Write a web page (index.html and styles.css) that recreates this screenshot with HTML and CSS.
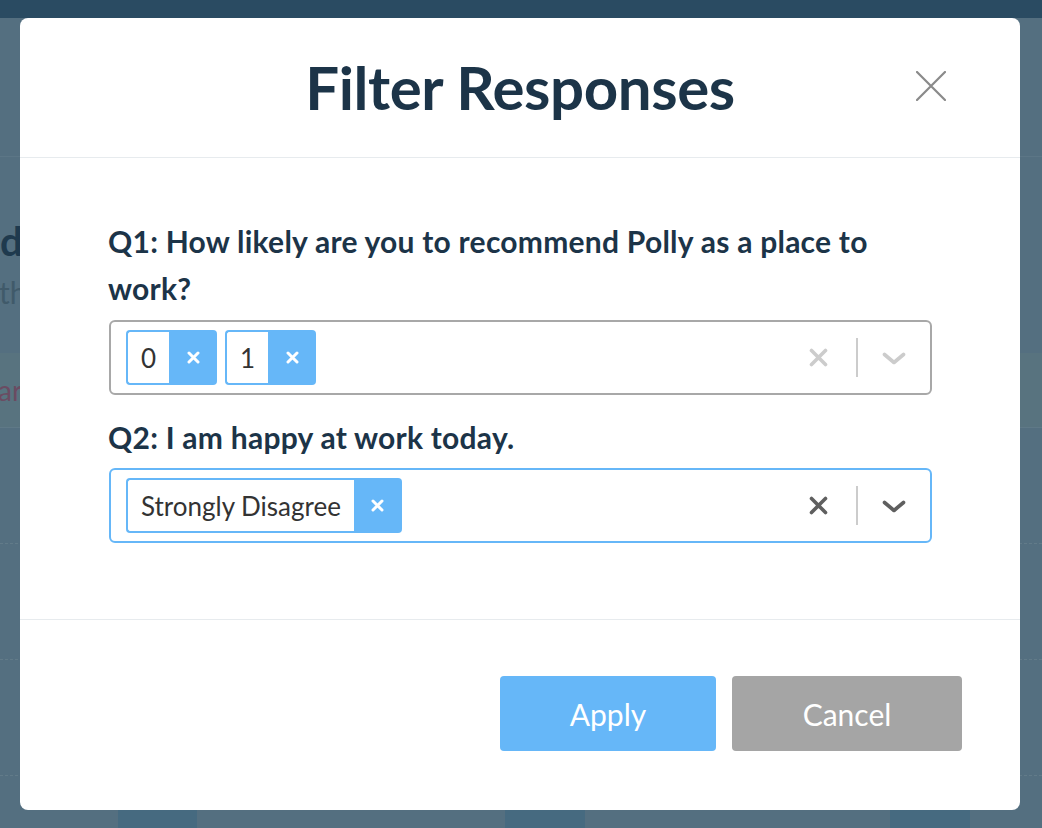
FILE: index.html
```html
<!DOCTYPE html>
<html lang="en">
<head>
<meta charset="utf-8">
<title>Filter Responses</title>
<link rel="stylesheet" href="styles.css">
</head>
<body>
<div class="page">
  <div class="topbar"></div>
  <div class="page-head"></div>
  <div class="page-title">da</div>
  <div class="page-sub">th</div>
  <div class="page-tabs"><span>ar</span></div>
  <div class="page-row"></div>
  <div class="page-row"></div>
  <div class="page-row"></div>
  <div class="page-foot"><span class="blk b1"></span><span class="blk b2"></span><span class="blk b3"></span></div>
</div>

<div class="overlay">
  <div class="modal">
    <div class="modal-header">
      <h2 class="modal-title">Filter Responses</h2>
      <button class="close" aria-label="Close">
        <svg width="30" height="30" viewBox="0 0 30 30"><path d="M1 1 L29 29 M29 1 L1 29" stroke="#8a8a8a" stroke-width="2.2" stroke-linecap="round" fill="none"/></svg>
      </button>
    </div>
    <div class="modal-body">
      <div class="question">Q1: How likely are you to recommend Polly as a place to work?</div>
      <div class="select">
        <div class="values">
          <div class="chip"><span class="chip-label">0</span><span class="chip-remove"><svg width="13" height="13" viewBox="0 0 13 13"><path d="M2 2 L11 11 M11 2 L2 11" stroke="#fff" stroke-width="3" stroke-linecap="round"/></svg></span></div>
          <div class="chip"><span class="chip-label">1</span><span class="chip-remove"><svg width="13" height="13" viewBox="0 0 13 13"><path d="M2 2 L11 11 M11 2 L2 11" stroke="#fff" stroke-width="3" stroke-linecap="round"/></svg></span></div>
        </div>
        <div class="indicators light">
          <span class="ind-clear"><svg width="19" height="19" viewBox="0 0 19 19"><path d="M2.5 2.5 L16.5 16.5 M16.5 2.5 L2.5 16.5" stroke-width="3.6" stroke-linecap="round"/></svg></span>
          <span class="ind-sep"></span>
          <span class="ind-chev"><svg width="24" height="13" viewBox="0 0 24 13"><path d="M2.5 2.5 L12 10.5 L21.5 2.5" stroke-width="3.6" stroke-linecap="round" stroke-linejoin="round" fill="none"/></svg></span>
        </div>
      </div>
      <div class="question q2">Q2: I am happy at work today.</div>
      <div class="select focused">
        <div class="values">
          <div class="chip"><span class="chip-label">Strongly Disagree</span><span class="chip-remove"><svg width="13" height="13" viewBox="0 0 13 13"><path d="M2 2 L11 11 M11 2 L2 11" stroke="#fff" stroke-width="3" stroke-linecap="round"/></svg></span></div>
        </div>
        <div class="indicators dark">
          <span class="ind-clear"><svg width="19" height="19" viewBox="0 0 19 19"><path d="M2.5 2.5 L16.5 16.5 M16.5 2.5 L2.5 16.5" stroke-width="3.6" stroke-linecap="round"/></svg></span>
          <span class="ind-sep"></span>
          <span class="ind-chev"><svg width="24" height="13" viewBox="0 0 24 13"><path d="M2.5 2.5 L12 10.5 L21.5 2.5" stroke-width="3.6" stroke-linecap="round" stroke-linejoin="round" fill="none"/></svg></span>
        </div>
      </div>
    </div>
    <div class="modal-footer">
      <button class="btn btn-apply">Apply</button>
      <button class="btn btn-cancel">Cancel</button>
    </div>
  </div>
</div>
</body>
</html>
```

FILE: styles.css
```css
* { box-sizing: border-box; }
html, body { margin: 0; padding: 0; }
body {
  width: 1042px;
  height: 828px;
  overflow: hidden;
  background: #546f80;
  font-family: Lato, "Liberation Sans", sans-serif;
}

/* background page (dimmed) */
.page { width: 1042px; height: 828px; display: flex; flex-direction: column; }
.topbar { height: 18px; background: #2a4b62; flex: none; }
.page-head { height: 139px; border-bottom: 1px solid #5c7686; flex: none; }
.page-title { margin: 64px 0 0 0; font-size: 40px; font-weight: 700; color: #1f3a4e; line-height: 40px; }
.page-sub { margin: 14px 0 0 -1px; font-size: 30px; color: #405a6a; line-height: 34px; }
.page-tabs { margin-top: 44px; height: 75px; background: #58737f; border-bottom: 1px solid #5f7987; display: flex; align-items: center; flex: none; }
.page-tabs span { margin-left: -2px; font-size: 28px; color: #6b4b62; }
.page-row { height: 116px; border-bottom: 1px dashed #627b89; flex: none; }
.page-row:first-of-type { height: 78px; }
.page-foot { flex: 1; display: flex; align-items: flex-end; }
.blk { height: 18px; background: #466a80; display: block; }
.b1 { margin-left: 118px; width: 79px; }
.b2 { margin-left: 308px; width: 80px; }
.b3 { margin-left: 305px; width: 80px; }

/* modal */
.overlay { position: fixed; inset: 0; }
.modal {
  position: absolute;
  left: 20px; top: 18px;
  width: 1000px; height: 792px;
  background: #fff;
  border-radius: 8px;
  display: flex; flex-direction: column;
}
.modal-header {
  height: 140px;
  border-bottom: 1px solid #e7ebee;
  display: flex; align-items: center; justify-content: center;
  position: relative;
  flex: none;
}
.modal-title {
  margin: 0;
  font-size: 60px;
  font-weight: 700;
  color: #1c3448;
  letter-spacing: -0.4px;
  line-height: 64px;
  padding-bottom: 2px;
}
.close {
  position: absolute;
  right: 74px; top: 53px;
  width: 30px; height: 30px;
  padding: 0; border: 0; background: none;
  display: block;
}
.close svg { display: block; }

.modal-body {
  flex: 1;
  padding: 60px 89px 0 88px;
}
.question {
  font-size: 30px;
  font-weight: 700;
  color: #1c3448;
  line-height: 47px;
  letter-spacing: 0.25px;
}
.q2 { margin-top: 19px; }
.select {
  margin-top: 8px;
  height: 75px;
  border: 2px solid #a8a8a8;
  border-radius: 6px;
  display: flex; align-items: center;
  width: 823px;
  margin-left: 1px;
}
.select.focused { border-color: #66b7f8; margin-top: 7px; }
.values { flex: 1; display: flex; gap: 8px; padding-left: 15px; }
.chip { display: flex; height: 55px; }
.chip-label {
  border: 2px solid #66b7f8;
  border-right: 0;
  border-radius: 4px 0 0 4px;
  background: #fff;
  padding: 0 13px 0 13px;
  display: flex; align-items: center;
  font-size: 26px;
  color: #333;
}
.chip-remove {
  width: 48px;
  background: #66b7f8;
  border-radius: 0 4px 4px 0;
  display: flex; align-items: center; justify-content: center;
}
.chip-remove svg { display: block; }
.indicators { display: flex; align-items: center; height: 100%; }
.ind-clear { width: 75px; display: flex; justify-content: center; }
.ind-sep { width: 2px; height: 39px; background: #cccccc; }
.ind-chev { width: 72px; display: flex; justify-content: center; padding-top: 1px; }
.indicators svg { display: block; }
.light svg path { stroke: #cccccc; }
.dark svg path { stroke: #5f5f5f; }

.modal-footer {
  height: 191px;
  flex: none;
  border-top: 1px solid #e7ebee;
  display: flex; justify-content: flex-end; align-items: flex-start;
  gap: 16px;
  padding: 56px 58px 0 0;
}
.btn {
  height: 75px;
  border: 0;
  border-radius: 4px;
  color: #fff;
  font-family: Lato, "Liberation Sans", sans-serif;
  font-size: 30px;
  font-weight: 400;
  padding: 0;
}
.btn-apply { width: 216px; background: #66b7f8; }
.btn-cancel { width: 230px; background: #a5a5a5; }
```
